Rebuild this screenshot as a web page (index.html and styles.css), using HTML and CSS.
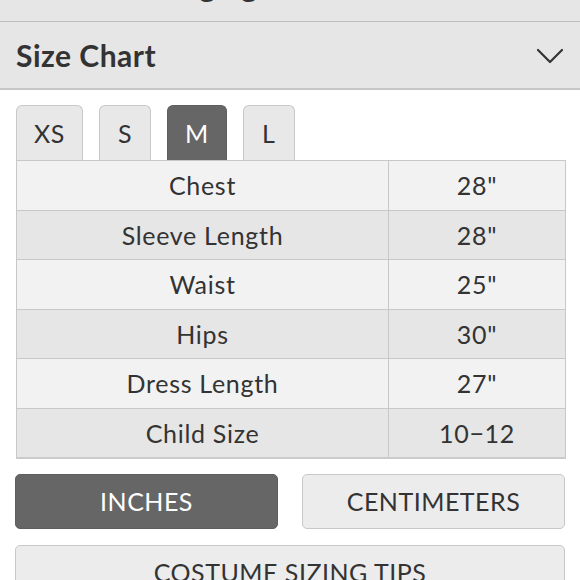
FILE: index.html
```html
<!DOCTYPE html>
<html>
<head>
<meta charset="utf-8">
<link rel="stylesheet" href="styles.css">
</head>
<body>
<div class="accordion">
  <div class="acc-header prev">
    <span class="acc-title prev-title">Care &amp; Packaging</span>
  </div>
  <div class="acc-header open">
    <span class="acc-title">Size Chart</span>
    <svg class="chevron" width="28" height="16" viewBox="0 0 28 16"><path d="M2 2 L14 14 L26 2" fill="none" stroke="#333" stroke-width="2.2" stroke-linecap="round" stroke-linejoin="round"/></svg>
  </div>
</div>
<div class="content">
  <div class="tabs">
    <div class="tab">XS</div>
    <div class="tab">S</div>
    <div class="tab active">M</div>
    <div class="tab">L</div>
  </div>
  <table class="chart">
    <tr class="light"><td class="label">Chest</td><td class="val">28"</td></tr>
    <tr class="dark"><td class="label">Sleeve Length</td><td class="val">28"</td></tr>
    <tr class="light"><td class="label">Waist</td><td class="val">25"</td></tr>
    <tr class="dark"><td class="label">Hips</td><td class="val">30"</td></tr>
    <tr class="light"><td class="label">Dress Length</td><td class="val">27"</td></tr>
    <tr class="dark"><td class="label">Child Size</td><td class="val">10&minus;12</td></tr>
  </table>
  <div class="units">
    <div class="btn active">INCHES</div>
    <div class="btn">CENTIMETERS</div>
  </div>
  <div class="btn wide">COSTUME SIZING TIPS</div>
</div>
</body>
</html>
```
FILE: styles.css
```css
html, body {
  margin: 0;
  padding: 0;
  background: #ffffff;
  font-family: Lato, "Open Sans", sans-serif;
  color: #333333;
}
.accordion {
  margin-top: -44px;
}
.acc-header {
  height: 66px;
  background: #e6e6e6;
  display: flex;
  align-items: center;
  justify-content: space-between;
  padding: 0 16px;
  box-sizing: border-box;
}
.acc-header.prev {
  border-bottom: 1px solid #bdbdbd;
}
.acc-header.open {
  height: 68px;
  border-bottom: 2px solid #c6c6c8;
}
.acc-title {
  font-size: 30px;
  font-weight: 700;
  letter-spacing: 0.5px;
  color: #333;
}
.prev-title {
  margin-top: -7px;
}
.chevron {
  margin-top: 2px;
}
.content {
  padding: 15px 15px 0 15px;
}
.tabs {
  display: flex;
  gap: 16px;
  margin-left: 1px;
}
.tab {
  height: 55px;
  box-sizing: border-box;
  padding: 0 17px;
  min-width: 52px;
  display: flex;
  align-items: center;
  justify-content: center;
  background: #e8e8e8;
  border: 1px solid #c8c8c8;
  border-bottom: none;
  border-radius: 6px 6px 0 0;
  font-size: 25px;
  letter-spacing: 0.6px;
}
.tab.active {
  background: #666666;
  border-color: #5e5e5e;
  color: #ffffff;
}
.chart {
  margin-left: 1px;
  width: 550px;
  border-collapse: collapse;
  font-size: 25px;
  letter-spacing: 0.7px;
}
.chart td {
  height: 49.5px;
  padding: 0;
  text-align: center;
  border: 1px solid #c8c8c8;
  box-sizing: border-box;
}
.chart tr:last-child td {
  border-bottom: 2px solid #cbcbcb;
}
.chart .label {
  width: 372px;
}
.chart tr.light td {
  background: #f2f2f2;
}
.chart tr.dark td {
  background: #e6e6e6;
}
.units {
  display: flex;
  gap: 24px;
  margin-top: 15px;
}
.btn {
  flex: 1;
  height: 55px;
  box-sizing: border-box;
  display: flex;
  align-items: center;
  justify-content: center;
  background: #ececec;
  border: 1px solid #c8c8c8;
  border-radius: 5px;
  font-size: 25px;
  letter-spacing: 0.5px;
  color: #333;
}
.btn.active {
  background: #666666;
  border-color: #5e5e5e;
  color: #ffffff;
}
.btn.wide {
  margin-top: 16px;
}
```
